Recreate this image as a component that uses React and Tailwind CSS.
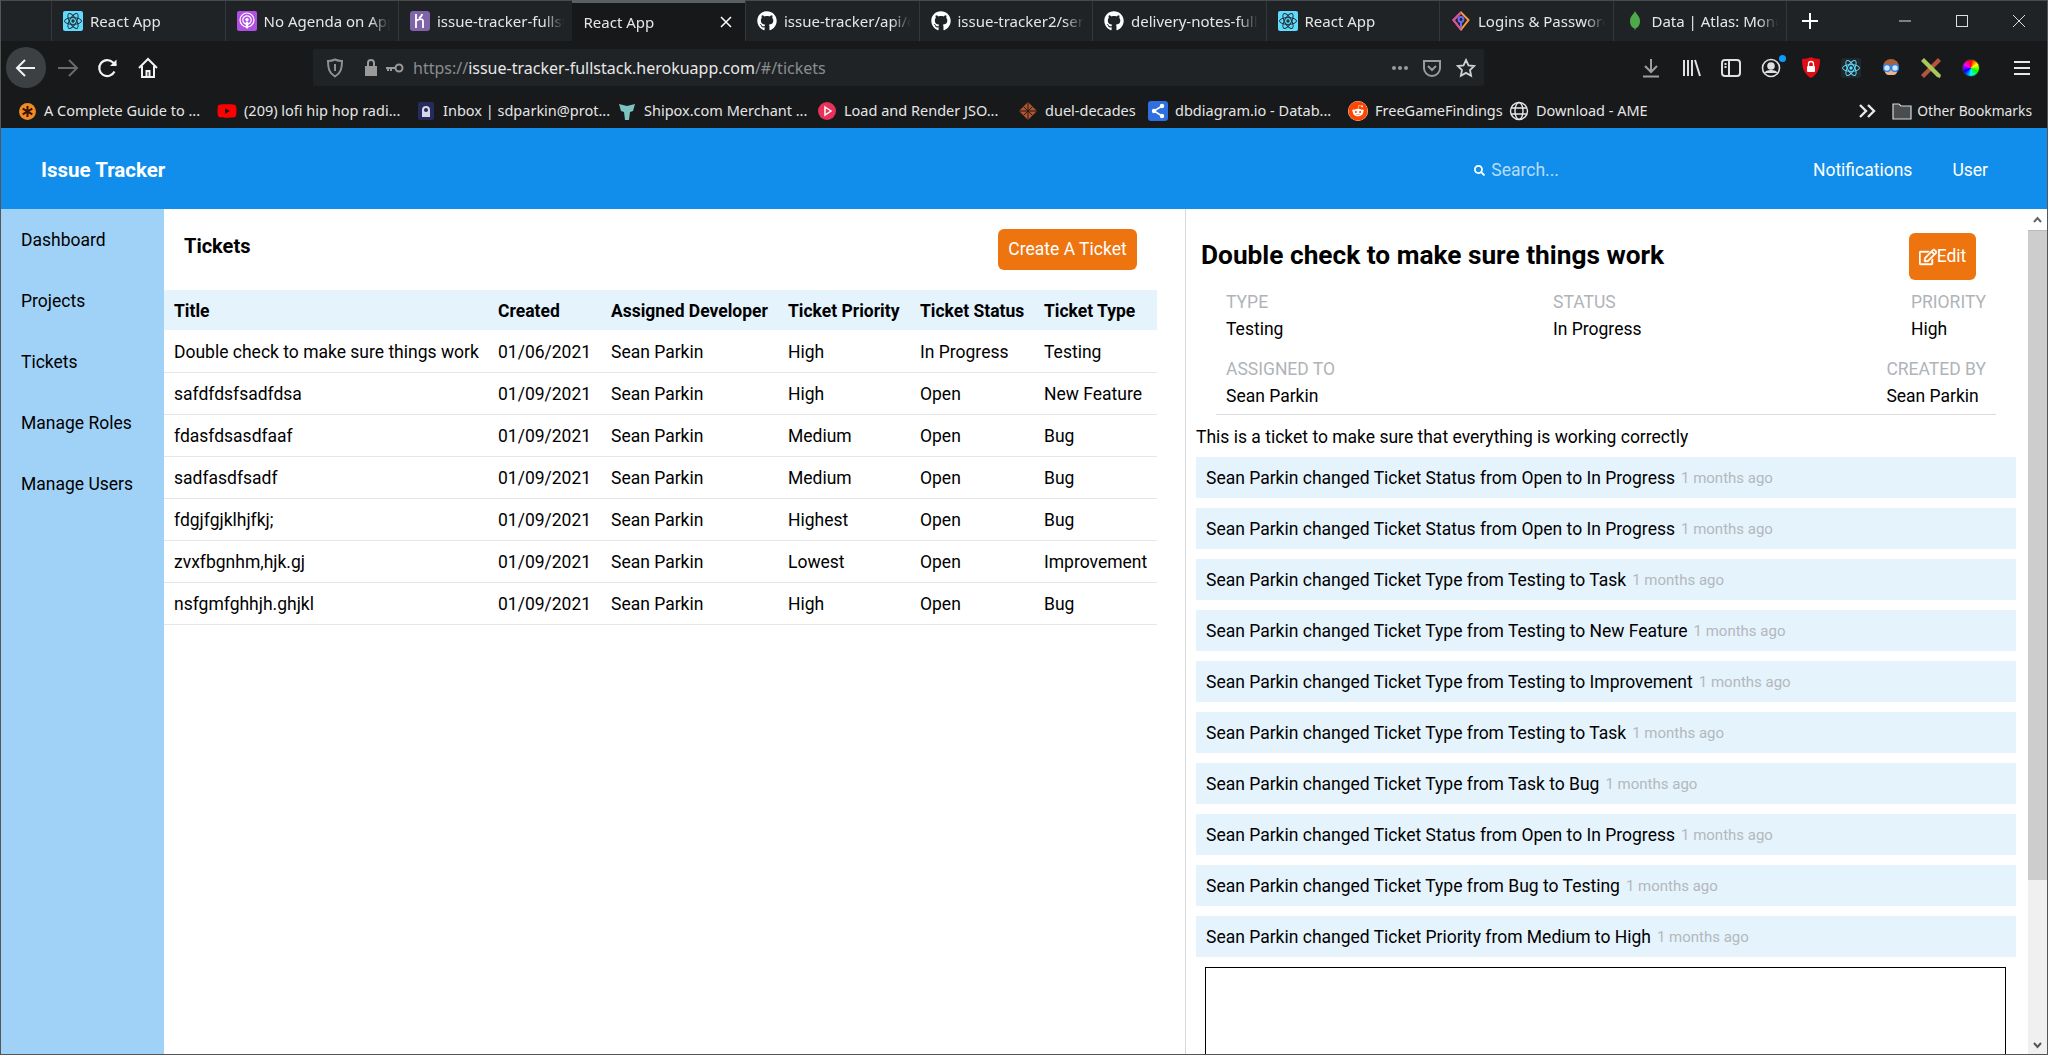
import React from "react";
import { FaGithub, FaRegEdit, FaSearch, FaReddit, FaYoutube } from "react-icons/fa";

const sans = "font-['Roboto',sans-serif]";
const chrome = "font-['Noto_Sans',sans-serif]";

const ReactIcon = ({ bg = "#61dafb", fg = "#20323a" }) => (
  <svg width="20" height="20" viewBox="0 0 20 20">
    <rect width="20" height="20" rx="2" fill={bg} />
    <g fill="none" stroke={fg} strokeWidth="1">
      <ellipse cx="10" cy="10" rx="8.5" ry="3.4" />
      <ellipse cx="10" cy="10" rx="8.5" ry="3.4" transform="rotate(60 10 10)" />
      <ellipse cx="10" cy="10" rx="8.5" ry="3.4" transform="rotate(120 10 10)" />
    </g>
    <circle cx="10" cy="10" r="1.7" fill={fg} />
  </svg>
);

const PodcastIcon = () => (
  <svg width="20" height="20" viewBox="0 0 20 20">
    <rect width="20" height="20" rx="2" fill="#b14fe0" />
    <g fill="none" stroke="#fff" strokeWidth="1.2">
      <circle cx="10" cy="9" r="7" />
      <circle cx="10" cy="9" r="4.2" />
    </g>
    <circle cx="10" cy="8.6" r="1.7" fill="#fff" />
    <rect x="8.8" y="10.5" width="2.4" height="7" rx="1" fill="#fff" />
  </svg>
);

const HerokuIcon = () => (
  <svg width="20" height="20" viewBox="0 0 20 20">
    <rect width="20" height="20" rx="3" fill="#7f64a8" />
    <path d="M6 3v14M6 10c2-2 7-3 7 0v7M12 3c0 2-1 3-3 4" fill="none" stroke="#fff" strokeWidth="1.8" />
  </svg>
);

const GithubIcon = () => <FaGithub className="text-white" size={20} />;

const LoginsIcon = () => (
  <svg width="20" height="20" viewBox="0 0 20 20" fill="none" strokeWidth="2">
    <path d="M10 1.5 17.5 9 10 18.5 2.5 9Z" stroke="#ff9a3c" />
    <path d="M10 18.5 2.5 9 10 1.5" stroke="#d84bb0" />
    <circle cx="10" cy="8.5" r="2.4" stroke="#6a6cf0" />
    <path d="M10 11v5" stroke="#6a6cf0" />
  </svg>
);

const MongoIcon = () => (
  <svg width="20" height="20" viewBox="0 0 20 20">
    <path d="M10 0c1 3 5 5 5 10s-3 7-4.500 7.500L10 20l-.5-2.500C8 17 5 15 5 10S9 3 10 0Z" fill="#4ea94b" />
  </svg>
);

const tabs = [
  { label: "React App", icon: <ReactIcon /> },
  { label: "No Agenda on Apple Podcasts", icon: <PodcastIcon /> },
  { label: "issue-tracker-fullstack", icon: <HerokuIcon /> },
  { label: "React App", active: true },
  { label: "issue-tracker/api/controllers", icon: <GithubIcon /> },
  { label: "issue-tracker2/server/routes", icon: <GithubIcon /> },
  { label: "delivery-notes-fullstack", icon: <GithubIcon /> },
  { label: "React App", icon: <ReactIcon /> },
  { label: "Logins & Passwords", icon: <LoginsIcon /> },
  { label: "Data | Atlas: MongoDB", icon: <MongoIcon /> },
];

const bookmarks = [
  {
    label: "A Complete Guide to ...",
    w: "w-[200px]",
    icon: (
      <svg width="17" height="17" viewBox="0 0 17 17">
        <circle cx="8.500" cy="8.500" r="8.500" fill="#f08a24" />
        <path d="M8.500 3v11M3.700 5.700l9.600 5.600M13.300 5.700l-9.600 5.600" stroke="#3a1208" strokeWidth="2" />
      </svg>
    ),
  },
  { label: "(209) lofi hip hop radi...", w: "w-[199px]", icon: <FaYoutube className="text-[#f00]" size={20} /> },
  {
    label: "Inbox | sdparkin@prot...",
    w: "w-[201px]",
    icon: (
      <svg width="18" height="18" viewBox="0 0 18 18">
        <rect x="1" width="16" height="18" rx="2" fill="#262a5c" />
        <path d="M5 8a4 4 0 0 1 8 0v7H5Z" fill="#d8d8e8" />
        <circle cx="9" cy="8" r="2" fill="#262a5c" />
      </svg>
    ),
  },
  {
    label: "Shipox.com Merchant ...",
    w: "w-[200px]",
    icon: (
      <svg width="18" height="18" viewBox="0 0 18 18">
        <path d="M1 2 9 4l8-2-2 7-3 1-1 8H7l-1-8-3-1Z" fill="#7cc4c0" />
      </svg>
    ),
  },
  {
    label: "Load and Render JSO...",
    w: "w-[201px]",
    icon: (
      <svg width="18" height="18" viewBox="0 0 18 18">
        <circle cx="9" cy="9" r="9" fill="#e8315b" />
        <path d="m7 5 6 4-6 4Z" fill="none" stroke="#fff" strokeWidth="1.500" />
      </svg>
    ),
  },
  {
    label: "duel-decades",
    w: "w-[130px]",
    icon: (
      <svg width="18" height="18" viewBox="0 0 18 18">
        <path d="M9 0 18 9 9 18 0 9Z" fill="#b5532a" />
        <path d="M4.500 4.500 13.500 13.500M13.500 4.500 4.500 13.500M0 9h18M9 0v18" stroke="#1a1c1e" strokeWidth="1" />
      </svg>
    ),
  },
  {
    label: "dbdiagram.io - Datab...",
    w: "w-[200px]",
    icon: (
      <svg width="20" height="20" viewBox="0 0 20 20">
        <rect width="20" height="20" rx="3" fill="#2f6fe0" />
        <path d="M14 5 6 10l8 5" fill="none" stroke="#fff" strokeWidth="1.500" />
        <circle cx="14" cy="5" r="2.200" fill="#fff" />
        <circle cx="6" cy="10" r="2.200" fill="#fff" />
        <circle cx="14" cy="15" r="2.200" fill="#fff" />
      </svg>
    ),
  },
  { label: "FreeGameFindings", w: "w-[161px]", icon: <FaReddit className="text-[#ff4500] bg-white rounded-full" size={20} /> },
  {
    label: "Download - AME",
    w: "w-[200px]",
    icon: (
      <svg width="20" height="20" viewBox="0 0 20 20" fill="none" stroke="#e8e8e8" strokeWidth="1.400">
        <circle cx="10" cy="10" r="8.500" />
        <ellipse cx="10" cy="10" rx="4" ry="8.500" />
        <path d="M2 7h16M2 13h16" />
      </svg>
    ),
  },
];

const tickets = [
  ["Double check to make sure things work", "01/06/2021", "High", "In Progress", "Testing"],
  ["safdfdsfsadfdsa", "01/09/2021", "High", "Open", "New Feature"],
  ["fdasfdsasdfaaf", "01/09/2021", "Medium", "Open", "Bug"],
  ["sadfasdfsadf", "01/09/2021", "Medium", "Open", "Bug"],
  ["fdgjfgjklhjfkj;", "01/09/2021", "Highest", "Open", "Bug"],
  ["zvxfbgnhm,hjk.gj", "01/09/2021", "Lowest", "Open", "Improvement"],
  ["nsfgmfghhjh.ghjkl", "01/09/2021", "High", "Open", "Bug"],
];

const history = [
  "Sean Parkin changed Ticket Status from Open to In Progress",
  "Sean Parkin changed Ticket Status from Open to In Progress",
  "Sean Parkin changed Ticket Type from Testing to Task",
  "Sean Parkin changed Ticket Type from Testing to New Feature",
  "Sean Parkin changed Ticket Type from Testing to Improvement",
  "Sean Parkin changed Ticket Type from Testing to Task",
  "Sean Parkin changed Ticket Type from Task to Bug",
  "Sean Parkin changed Ticket Status from Open to In Progress",
  "Sean Parkin changed Ticket Type from Bug to Testing",
  "Sean Parkin changed Ticket Priority from Medium to High",
];

const nav = ["Dashboard", "Projects", "Tickets", "Manage Roles", "Manage Users"];

function TabBar() {
  return (
    <div className={`flex h-[41px] pl-[50px] bg-[#1f2326] border-t border-[#4a4a4a] ${chrome}`}>
      {tabs.map((t, i) => (
        <div
          key={i}
          className={
            t.active
              ? "flex items-center shrink-0 w-[173.5px] pl-[12px] pr-[12px] bg-[#16181a] border-t-[3px] border-[#5a5f63] -mt-px"
              : "flex items-center shrink-0 w-[173.5px] pl-[11px] pr-[8px] gap-[7px] border-l border-[#33383b]"
          }
        >
          {t.icon && <span className="shrink-0">{t.icon}</span>}
          <span className="flex-1 min-w-0 whitespace-nowrap overflow-hidden text-[15px] text-[#e6e6e6] [mask-image:linear-gradient(to_left,transparent,black_20px)]">
            {t.label}
          </span>
          {t.active && (
            <svg width="14" height="14" viewBox="0 0 14 14" className="shrink-0 ml-2" stroke="#fff" strokeWidth="1.500">
              <path d="M2 2 12 12M12 2 2 12" />
            </svg>
          )}
        </div>
      ))}
      <div className="flex items-center border-l border-[#33383b] pl-[13px]">
        <svg width="20" height="20" viewBox="0 0 20 20" stroke="#fff" strokeWidth="2">
          <path d="M10 2v16M2 10h16" />
        </svg>
      </div>
      <div className="flex items-center ml-auto">
        <div className="flex justify-center w-[57px]">
          <svg width="14" height="14" viewBox="0 0 14 14" stroke="#ddd"><path d="M1 7h12" /></svg>
        </div>
        <div className="flex justify-center w-[57px]">
          <svg width="14" height="14" viewBox="0 0 14 14" fill="none" stroke="#ddd"><rect x="1.500" y="1.500" width="11" height="11" /></svg>
        </div>
        <div className="flex justify-center w-[57px]">
          <svg width="14" height="14" viewBox="0 0 14 14" stroke="#ddd"><path d="M1 1 13 13M13 1 1 13" /></svg>
        </div>
      </div>
    </div>
  );
}

function ToolButton({ children, className = "w-10" }) {
  return <div className={`flex items-center justify-center h-10 ${className}`}>{children}</div>;
}

function NavBar() {
  return (
    <div className={`flex items-center h-[49px] pt-[4px] bg-[#17191b] ${chrome}`}>
      <div className="flex items-center justify-center w-[40px] h-[41px] ml-[5px] rounded-full bg-[#3c4043]">
        <svg width="22" height="22" viewBox="0 0 22 22" fill="none" stroke="#f2f2f2" strokeWidth="2">
          <path d="M20 11H2M10 3l-8 8 8 8" />
        </svg>
      </div>
      <ToolButton className="w-[40px] ml-[2px]">
        <svg width="22" height="22" viewBox="0 0 22 22" fill="none" stroke="#6a6a6a" strokeWidth="2">
          <path d="M1 11h19M12 3l8 8-8 8" />
        </svg>
      </ToolButton>
      <ToolButton className="w-[40px]">
        <svg width="22" height="22" viewBox="0 0 22 22" fill="none" stroke="#f2f2f2" strokeWidth="2.200">
          <path d="M17.500 14.500A8 8 0 1 1 16 5.500l3 3" />
          <path d="M19.500 2.500v6.500h-6.500" fill="#f2f2f2" stroke="none" />
        </svg>
      </ToolButton>
      <ToolButton className="w-[40px]">
        <svg width="22" height="22" viewBox="0 0 22 22" fill="none" stroke="#f2f2f2" strokeWidth="2">
          <path d="M2 11 11 2l9 9M5 9v11h12V9M9.500 20v-6h3v6" />
        </svg>
      </ToolButton>

      {/* url box */}
      <div className="flex items-center w-[1171px] h-[37px] ml-[145px] bg-[#1f2326] rounded-[2px] pl-[13px] pr-[8px]">
        <svg width="18" height="20" viewBox="0 0 18 20" fill="none" stroke="#8f8f8f" strokeWidth="2">
          <path d="M9 1.500c2 1 5 1.500 7 1.500 0 7-1 12-7 15.500C3 15 2 10 2 3c2 0 5-.500 7-1.500Z" />
          <path d="M9 6v7" />
        </svg>
        <svg width="16" height="19" viewBox="0 0 16 19" fill="#9a9a9a" className="ml-[19px]">
          <path d="M4 8V5a4 4 0 0 1 8 0v3h2v10H2V8Zm2 0h4V5a2 2 0 0 0-4 0Z" />
        </svg>
        <svg width="20" height="12" viewBox="0 0 20 12" fill="none" stroke="#9a9a9a" strokeWidth="2" className="ml-[6px]">
          <circle cx="14" cy="6" r="3.500" />
          <path d="M10 6H1M3 6v3M6 6v3" />
        </svg>
        <div className="ml-[8px] text-[16px] whitespace-nowrap text-[#8a8d8f]">
          https://<span className="text-[#e8e8e8]">issue-tracker-fullstack.herokuapp.com</span>/#/tickets
        </div>
        <div className="ml-auto flex items-center gap-[14px]">
          <div className="flex gap-[2px]">
            <span className="w-[4px] h-[4px] rounded-full bg-[#9a9a9a]" />
            <span className="w-[4px] h-[4px] rounded-full bg-[#9a9a9a]" />
            <span className="w-[4px] h-[4px] rounded-full bg-[#9a9a9a]" />
          </div>
          <svg width="20" height="20" viewBox="0 0 20 20" fill="none" stroke="#9a9a9a" strokeWidth="2">
            <path d="M2 3h16v7a8 8 0 0 1-16 0ZM6 8l4 4 4-4" />
          </svg>
          <svg width="20" height="20" viewBox="0 0 20 20" fill="none" stroke="#d0d0d0" strokeWidth="1.800">
            <path d="m10 2 2.500 5.300 5.700.7-4.200 4 1.100 5.800-5.100-2.900-5.100 2.900L6 12 1.800 8l5.700-.7Z" />
          </svg>
        </div>
      </div>

      <div className="flex items-center ml-[147px]">
        <ToolButton>
          <svg width="20" height="20" viewBox="0 0 20 20" fill="none" stroke="#9f9f9f" strokeWidth="2">
            <path d="M10 1v12M4 8l6 6 6-6M2 18.500h16" />
          </svg>
        </ToolButton>
        <ToolButton>
          <svg width="20" height="20" viewBox="0 0 20 20" fill="none" stroke="#e0e0e0" strokeWidth="2">
            <path d="M3 2v16M7 2v16M11 2v16M14 2l5 16" />
          </svg>
        </ToolButton>
        <ToolButton>
          <svg width="20" height="20" viewBox="0 0 20 20" fill="none" stroke="#e0e0e0" strokeWidth="2">
            <rect x="1" y="2" width="18" height="16" rx="3" />
            <path d="M8 2v16M3.500 6h2M3.500 9h2" />
          </svg>
        </ToolButton>
        <ToolButton>
          <div className="relative">
            <svg width="20" height="20" viewBox="0 0 20 20" fill="none" stroke="#e0e0e0" strokeWidth="1.600">
              <circle cx="10" cy="10" r="8.500" />
              <circle cx="10" cy="8" r="3" fill="#e0e0e0" />
              <path d="M4.500 15c1-3 10-3 11 0" fill="#e0e0e0" />
            </svg>
            <span className="absolute -top-[3px] -right-[5px] w-[7px] h-[7px] rounded-full bg-[#0a9dff]" />
          </div>
        </ToolButton>
        <ToolButton>
          <svg width="20" height="21" viewBox="0 0 20 21">
            <path d="M10 0c2 1 6 2 9 2 0 9-2 15-9 19C3 17 1 11 1 2c3 0 7-1 9-2Z" fill="#e00d14" />
            <rect x="6" y="9" width="8" height="6" rx="1" fill="#fff" />
            <path d="M7.500 9V7a2.500 2.500 0 0 1 5 0v2" fill="none" stroke="#fff" strokeWidth="1.300" />
          </svg>
        </ToolButton>
        <ToolButton>
          <ReactIcon bg="#20282c" fg="#61dafb" />
        </ToolButton>
        <ToolButton>
          <svg width="20" height="20" viewBox="0 0 20 20">
            <circle cx="10" cy="9" r="8" fill="#a8623a" />
            <rect x="4" y="8" width="12" height="9" rx="4" fill="#e9b48e" />
            <circle cx="6" cy="10" r="3.400" fill="#cfe8ff" stroke="#2a7de1" strokeWidth="1.400" />
            <circle cx="14" cy="10" r="3.400" fill="#cfe8ff" stroke="#2a7de1" strokeWidth="1.400" />
          </svg>
        </ToolButton>
        <ToolButton>
          <svg width="22" height="22" viewBox="0 0 22 22">
            <path d="M18 1l3 3L4 21l-3-3Z" fill="#b5533c" />
            <path d="M4 1 21 18l-1 3-3-1L1 4Z" fill="#a7c957" />
          </svg>
        </ToolButton>
        <ToolButton>
          <div className="w-[18px] h-[18px] rounded-full bg-[conic-gradient(#f00,#ff0,#0f0,#0ff,#00f,#f0f,#f00)] border border-[#333]" />
        </ToolButton>
        <ToolButton className="w-10 ml-[11px]">
          <svg width="16" height="16" viewBox="0 0 16 16" stroke="#e8e8e8" strokeWidth="2.200">
            <path d="M0 2h16M0 8h16M0 14h16" />
          </svg>
        </ToolButton>
      </div>
    </div>
  );
}

function BookmarkBar() {
  return (
    <div className={`flex items-center h-[38px] pl-[16px] pt-[4px] bg-[#17191b] text-[14.500px] text-[#e6e6e6] ${chrome}`}>
      {bookmarks.map((b) => (
        <div key={b.label} className={`flex items-center gap-[7px] whitespace-nowrap ${b.w}`}>
          <span className="flex shrink-0 w-[20px] justify-center">{b.icon}</span>
          <span>{b.label}</span>
        </div>
      ))}
      <svg width="18" height="16" viewBox="0 0 18 16" fill="none" stroke="#e8e8e8" strokeWidth="2.400" className="ml-auto">
        <path d="m2 2 6 6-6 6M10 2l6 6-6 6" />
      </svg>
      <svg width="20" height="18" viewBox="0 0 20 18" fill="#4a4d50" stroke="#d8d8d8" strokeWidth="1.200" className="ml-[16px]">
        <path d="M1 2h6l2 2h10v13H1Z" />
      </svg>
      <span className="ml-[5px] mr-[15px] text-[13.800px] whitespace-nowrap">Other Bookmarks</span>
    </div>
  );
}

function AppHeader() {
  return (
    <div className="flex items-center h-[81px] pt-[3px] pl-[40px] pr-[59px] bg-[#118eeb] text-white text-[17.5px]">
      <div className="font-bold text-[20.5px]">Issue Tracker</div>
      <div className="flex items-center ml-[1309px] text-white/70">
        <FaSearch size={11} className="text-white" />
        <span className="ml-[6px]">Search...</span>
      </div>
      <div className="ml-auto">Notifications</div>
      <div className="ml-[40px]">User</div>
    </div>
  );
}

function TicketsTable() {
  return (
    <div className="w-[993px]">
      <div className="flex items-center justify-between h-[81px] pl-[20px] pr-[20px]">
        <h2 className="-mt-[7px] font-bold text-[20px] text-black">Tickets</h2>
        <button className="h-[41px] w-[139px] rounded-[6px] bg-[#ee7410] text-white text-[17.5px]">
          Create A Ticket
        </button>
      </div>
      <table className="w-full table-fixed border-collapse text-[17.5px] text-black">
        <colgroup>
          <col className="w-[324px]" />
          <col className="w-[113px]" />
          <col className="w-[177px]" />
          <col className="w-[132px]" />
          <col className="w-[124px]" />
          <col />
        </colgroup>
        <thead className="bg-[#e5f3fd]">
          <tr className="h-[40px]">
            <th className="pl-[10px] pt-[2px] text-left font-bold">Title</th>
            <th className="pl-[10px] pt-[2px] text-left font-bold">Created</th>
            <th className="pl-[10px] pt-[2px] text-left font-bold">Assigned Developer</th>
            <th className="pl-[10px] pt-[2px] text-left font-bold">Ticket Priority</th>
            <th className="pl-[10px] pt-[2px] text-left font-bold">Ticket Status</th>
            <th className="pl-[10px] pt-[2px] text-left font-bold">Ticket Type</th>
          </tr>
        </thead>
        <tbody>
          {tickets.map((t) => (
            <tr key={t[0]} className="h-[42px] border-b border-[#e6e6e6]">
              <td className="pl-[10px] pt-[2px] whitespace-nowrap">{t[0]}</td>
              <td className="pl-[10px] pt-[2px]">{t[1]}</td>
              <td className="pl-[10px] pt-[2px]">Sean Parkin</td>
              <td className="pl-[10px] pt-[2px]">{t[2]}</td>
              <td className="pl-[10px] pt-[2px]">{t[3]}</td>
              <td className="pl-[10px] pt-[2px] whitespace-nowrap">{t[4]}</td>
            </tr>
          ))}
        </tbody>
      </table>
    </div>
  );
}

function Field({ label, value, className = "" }) {
  return (
    <div className={className}>
      <div className="text-[17.5px] leading-[27px] text-[#b0b4b8]">{label}</div>
      <div className="text-[17.5px] leading-[27px] text-black">{value}</div>
    </div>
  );
}

function TicketDetail() {
  return (
    <div className="flex-1 h-full overflow-hidden pl-[10px] text-black">
      <div className="flex items-center justify-between h-[72px] pt-[23px] pl-[5px] pr-[52px]">
        <h1 className="-mt-[2px] text-[26.25px] font-bold">Double check to make sure things work</h1>
        <button className="flex items-center justify-center w-[67px] h-[47px] rounded-[6px] bg-[#ee7410] text-white text-[17.5px]">
          <FaRegEdit size={18} strokeWidth={14} />
          Edit
        </button>
      </div>
      <div className="w-[780px] h-[134px] ml-[20px] pt-[8px] px-[10px] border-b border-[#dcdcdc]">
        <div className="flex">
          <Field label="TYPE" value="Testing" className="w-[327px]" />
          <Field label="STATUS" value="In Progress" />
          <Field label="PRIORITY" value="High" className="ml-auto" />
        </div>
        <div className="flex justify-between mt-[13px]">
          <Field label="ASSIGNED TO" value="Sean Parkin" />
          <Field label="CREATED BY" value="Sean Parkin" />
        </div>
      </div>
      <p className="text-[17.5px] leading-[27px] mt-[8px] pt-[1px] -mb-[1px]">
        This is a ticket to make sure that everything is working correctly
      </p>
      <ul className="mt-[7px] w-[820px]">
        {history.map((h, i) => (
          <li key={i} className="flex items-center h-[41px] mb-[10px] pl-[10px] pt-[2px] bg-[#e5f3fd] text-[17.5px]">
            {h}
            <span className="ml-[6px] text-[15px] text-[#b3b8bc]">1 months ago</span>
          </li>
        ))}
      </ul>
      <div className="w-[801px] h-[200px] ml-[9px] border border-black" />
    </div>
  );
}

function Scrollbar() {
  return (
    <div className="flex flex-col w-[19px] h-full bg-[#f0f0f0]">
      <div className="flex items-center justify-center h-[22px] border-b border-[#bbb] bg-white">
        <svg width="9" height="7" viewBox="0 0 9 7" fill="none" stroke="#666" strokeWidth="2"><path d="m1 6 3.500-4L8 6" /></svg>
      </div>
      <div className="h-[649px] bg-[#cdcdcd]" />
      <div className="flex-1" />
      <div className="flex items-center justify-center h-[17px]">
        <svg width="9" height="7" viewBox="0 0 9 7" fill="none" stroke="#555" strokeWidth="2"><path d="m1 1 3.500 4L8 1" /></svg>
      </div>
    </div>
  );
}

export default function App() {
  return (
    <div className={`flex flex-col h-screen overflow-hidden bg-white border-x border-b border-[#555] ${sans}`}>
      <TabBar />
      <NavBar />
      <BookmarkBar />
      <AppHeader />
      <div className="flex flex-1 min-h-0">
        <aside className="w-[163px] shrink-0 bg-[#a0d2f8] pl-[20px] pt-[16px] text-[17.5px] text-black">
          {nav.map((n) => (
            <div key={n} className="h-[61px] leading-[30px]">{n}</div>
          ))}
        </aside>
        <TicketsTable />
        <div className="w-[29px] border-r border-[#d8d8d8]" />
        <TicketDetail />
        <Scrollbar />
      </div>
    </div>
  );
}
